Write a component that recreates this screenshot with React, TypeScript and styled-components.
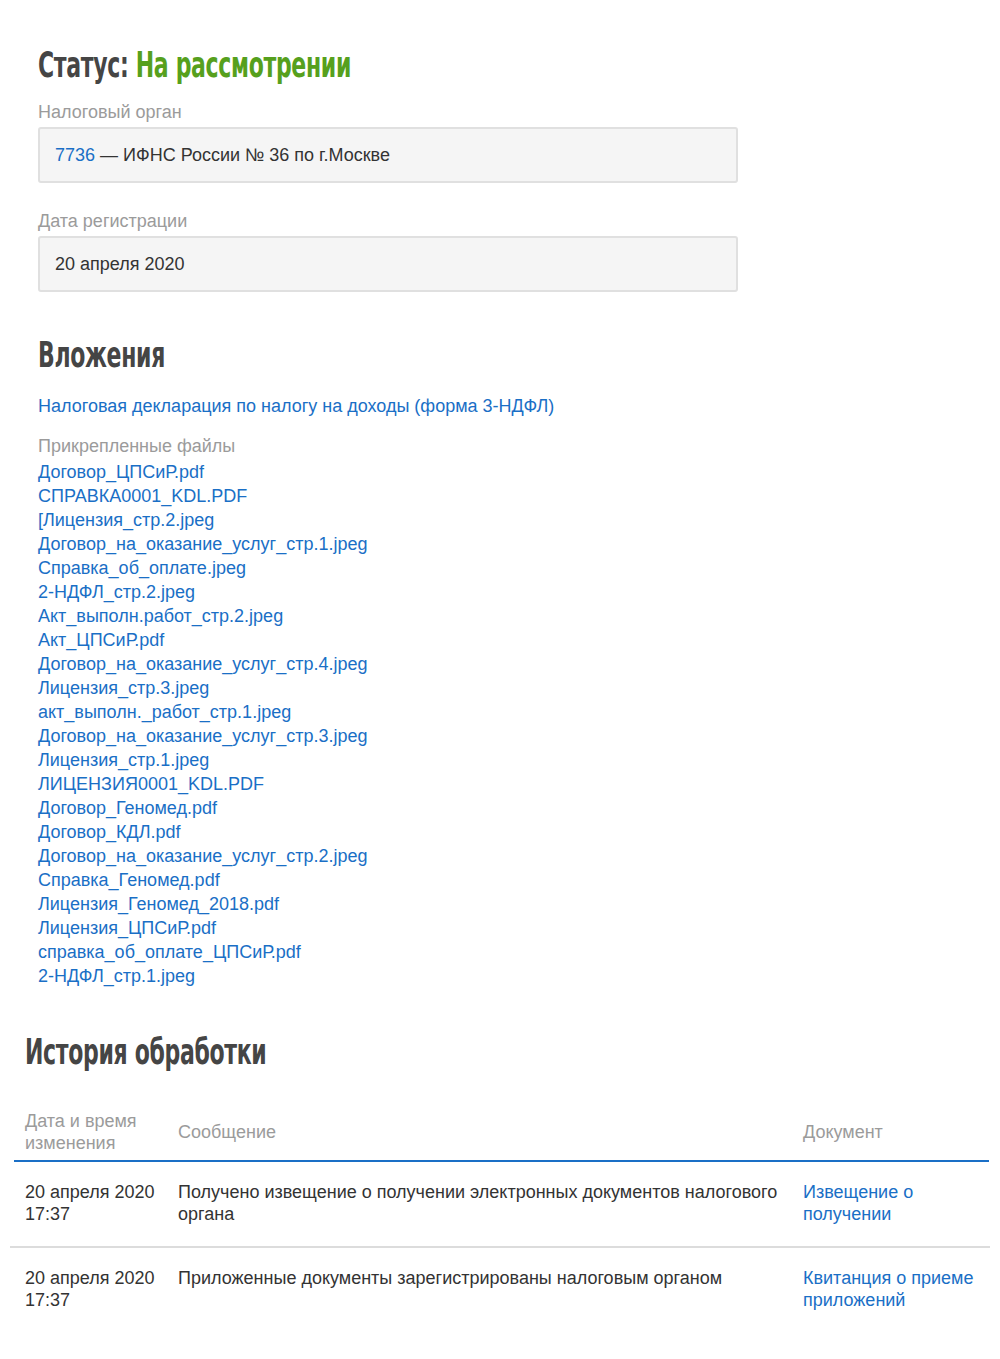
import React from "react";
import styled, { createGlobalStyle } from "styled-components";

const GlobalStyle = createGlobalStyle`
  html, body { margin: 0; padding: 0; background: #fff; }
  body {
    font-family: "Liberation Sans", Arial, sans-serif;
    font-size: 18px;
    color: #333;
  }
`;

const Page = styled.div`
  width: 1000px;
  min-height: 1359px;
  box-sizing: border-box;
  padding: 43px 0 40px 0;
`;

const Section = styled.section`
  padding-left: 38px;
`;

const HeadingBase = styled.h2`
  margin: 0;
  font-family: "DejaVu Sans Condensed", "DejaVu Sans", sans-serif;
  font-weight: 700;
  font-size: 36px;
  line-height: 44px;
  color: #454545;
  letter-spacing: -0.5px;
`;

/* condensed display face: the bold condensed face is squeezed horizontally */
const Condensed = styled.span`
  display: inline-block;
  white-space: nowrap;
  transform: scaleX(0.68);
  transform-origin: left center;
`;

const StatusHeading = styled(HeadingBase)`
  margin-bottom: 14px;
`;

const Green = styled.span`
  color: #56a01d;
`;

const FieldLabel = styled.div`
  color: #9b9b9b;
  line-height: 22px;
  margin-bottom: 4px;
`;

const FieldBox = styled.div`
  width: 700px;
  height: 56px;
  box-sizing: border-box;
  border: 2px solid #e0e0e0;
  border-radius: 3px;
  background: #f5f5f5;
  display: flex;
  align-items: center;
  padding: 0 15px;
  color: #333;
  margin-bottom: 27px;
`;

const Link = styled.a`
  color: #1a6fc6;
  text-decoration: none;
  cursor: pointer;
`;

const AttachHeading = styled(HeadingBase)`
  margin-top: 41px;
  margin-bottom: 17px;
`;

const DeclLink = styled(Link)`
  display: block;
  line-height: 24px;
  margin-bottom: 16px;
`;

const SubLabel = styled.div`
  color: #9b9b9b;
  line-height: 24px;
  margin-bottom: 2px;
`;

const FileList = styled.ul`
  list-style: none;
  margin: 0;
  padding: 0;
`;

const FileItem = styled.li`
  line-height: 24px;
`;

const HistorySection = styled.section`
  padding-left: 10px;
  padding-right: 10px;
  margin-top: 42px;
`;

const HistoryHeading = styled(HeadingBase)`
  padding-left: 15px;
  margin-bottom: 36px;
`;

const Table = styled.div`
  display: grid;
  grid-template-columns: 153px 625px 1fr;
`;

const HeadCell = styled.div<{ $first?: boolean; $last?: boolean }>`
  color: #9b9b9b;
  line-height: 22px;
  padding: 0 8px 6px ${(p) => (p.$first ? "11px" : "15px")};
  margin-left: ${(p) => (p.$first ? "4px" : "0")};
  margin-right: ${(p) => (p.$last ? "1px" : "0")};
  border-bottom: 2px solid #1a6fc6;
  display: flex;
  align-items: center;
`;

const Cell = styled.div<{ $last?: boolean }>`
  line-height: 22px;
  padding: 19px 8px 21px 15px;
  border-bottom: ${(p) => (p.$last ? "none" : "2px solid #dcdcdc")};
`;

const DocLink = styled(Link)`
  display: block;
`;

const files = [
  "Договор_ЦПСиР.pdf",
  "СПРАВКА0001_KDL.PDF",
  "[Лицензия_стр.2.jpeg",
  "Договор_на_оказание_услуг_стр.1.jpeg",
  "Справка_об_оплате.jpeg",
  "2-НДФЛ_стр.2.jpeg",
  "Акт_выполн.работ_стр.2.jpeg",
  "Акт_ЦПСиР.pdf",
  "Договор_на_оказание_услуг_стр.4.jpeg",
  "Лицензия_стр.3.jpeg",
  "акт_выполн._работ_стр.1.jpeg",
  "Договор_на_оказание_услуг_стр.3.jpeg",
  "Лицензия_стр.1.jpeg",
  "ЛИЦЕНЗИЯ0001_KDL.PDF",
  "Договор_Геномед.pdf",
  "Договор_КДЛ.pdf",
  "Договор_на_оказание_услуг_стр.2.jpeg",
  "Справка_Геномед.pdf",
  "Лицензия_Геномед_2018.pdf",
  "Лицензия_ЦПСиР.pdf",
  "справка_об_оплате_ЦПСиР.pdf",
  "2-НДФЛ_стр.1.jpeg",
];

const history = [
  {
    date: "20 апреля 2020",
    time: "17:37",
    message: "Получено извещение о получении электронных документов налогового органа",
    doc: "Извещение о получении",
  },
  {
    date: "20 апреля 2020",
    time: "17:37",
    message: "Приложенные документы зарегистрированы налоговым органом",
    doc: "Квитанция о приеме приложений",
  },
];

export default function App() {
  return (
    <Page>
      <GlobalStyle />
      <Section>
        <StatusHeading>
          <Condensed>
            Статус: <Green>На рассмотрении</Green>
          </Condensed>
        </StatusHeading>
        <FieldLabel>Налоговый орган</FieldLabel>
        <FieldBox>
          <Link>7736</Link>&nbsp;— ИФНС России № 36 по г.Москве
        </FieldBox>
        <FieldLabel>Дата регистрации</FieldLabel>
        <FieldBox>20 апреля 2020</FieldBox>

        <AttachHeading>
          <Condensed>Вложения</Condensed>
        </AttachHeading>
        <DeclLink>Налоговая декларация по налогу на доходы (форма 3-НДФЛ)</DeclLink>
        <SubLabel>Прикрепленные файлы</SubLabel>
        <FileList>
          {files.map((f) => (
            <FileItem key={f}>
              <Link>{f}</Link>
            </FileItem>
          ))}
        </FileList>
      </Section>

      <HistorySection>
        <HistoryHeading>
          <Condensed>История обработки</Condensed>
        </HistoryHeading>
        <Table>
          <HeadCell $first>
            Дата и время
            <br />
            изменения
          </HeadCell>
          <HeadCell>Сообщение</HeadCell>
          <HeadCell $last>Документ</HeadCell>
          {history.map((h, i) => {
            const last = i === history.length - 1;
            return (
              <React.Fragment key={i}>
                <Cell $last={last}>
                  {h.date}
                  <br />
                  {h.time}
                </Cell>
                <Cell $last={last}>{h.message}</Cell>
                <Cell $last={last}>
                  <DocLink>{h.doc}</DocLink>
                </Cell>
              </React.Fragment>
            );
          })}
        </Table>
      </HistorySection>
    </Page>
  );
}
